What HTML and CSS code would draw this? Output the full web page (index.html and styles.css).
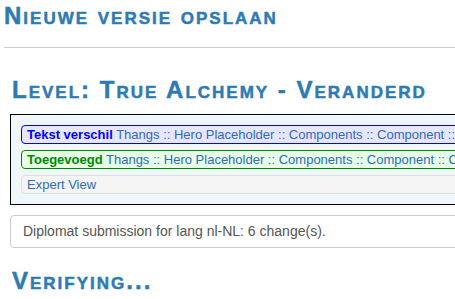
FILE: index.html
```html
<!DOCTYPE html>
<html lang="nl">
<head>
    <meta charset="UTF-8">
    <title>Nieuwe versie opslaan</title>
    <link rel="stylesheet" href="styles.css">
</head>
<body>
    <div class="page">
        <h3 class="title">Nieuwe versie opslaan</h3>
        <hr>

        <h3 class="title level-name">Level: True Alchemy - Veranderd</h3>

        <div class="changes">
            <div class="delta delta-text">
                <strong>Tekst verschil</strong>
                <span class="path">Thangs :: Hero Placeholder :: Components :: Component :: Config :: Programmable</span>
            </div>
            <div class="delta delta-added">
                <strong>Toegevoegd</strong>
                <span class="path">Thangs :: Hero Placeholder :: Components :: Component :: Config :: Programmable</span>
            </div>
            <div class="delta expert">
                <span class="path">Expert View</span>
            </div>
        </div>

        <div class="submission">Diplomat submission for lang nl-NL: 6 change(s).</div>

        <h3 class="title verifying">Verifying...</h3>
    </div>
</body>
</html>
```

FILE: styles.css
```css
html, body {
    margin: 0;
    padding: 0;
    overflow: hidden;
    background: #fff;
}

body {
    font-family: "Liberation Sans", Arial, sans-serif;
    font-size: 14px;
    color: #555;
}

.page {
    width: 900px;
    padding: 3px 0 0 4px;
}

.title {
    margin: 0;
    font-size: 24px;
    line-height: 26px;
    font-weight: bold;
    font-variant: small-caps;
    letter-spacing: 2px;
    -webkit-text-stroke: 0.5px #2e7bb3;
    color: #2e7bb3;
}

hr {
    margin: 18px -4px 0 0;
    border: 0;
    border-top: 1px solid #ccc;
    height: 0;
}

.level-name {
    margin: 29px 0 0 8px;
}

.changes {
    margin: 11px 0 0 6px;
    padding: 10px;
    border: 1px solid #000;
    background: #eff7fa;
}

.delta {
    height: 17px;
    line-height: 17px;
    padding: 0 5px;
    margin-bottom: 6px;
    border: 1px solid #ddd;
    border-radius: 4px;
    white-space: nowrap;
    overflow: hidden;
    font-size: 13px;
}

.delta:last-child {
    margin-bottom: 0;
}

.delta-text {
    border-color: #00f;
    background: #e6e6ff;
}

.delta-text strong {
    color: #00f;
}

.delta-added {
    border-color: #080;
    background: #e6ffe6;
}

.delta-added strong {
    color: #080;
}

.expert {
    background: #f5f5f5;
}

.path {
    color: #3069c0;
}

.submission {
    margin: 10px 0 0 6px;
    padding: 0 12px;
    height: 31px;
    line-height: 31px;
    border: 1px solid #ccc;
    border-radius: 4px;
}

.verifying {
    margin: 20px 0 0 8px;
}
```
